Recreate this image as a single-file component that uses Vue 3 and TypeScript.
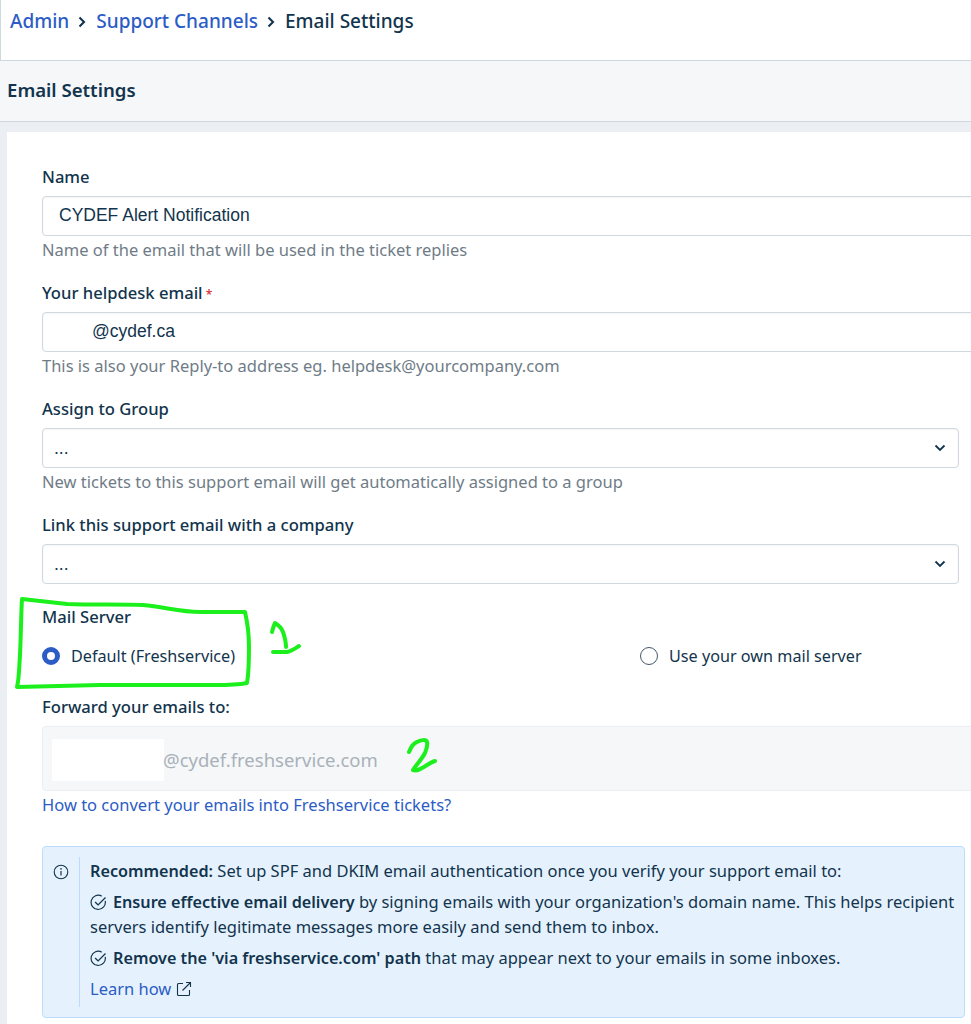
<script setup lang="ts">
interface Field { label: string; value: string; help: string; required?: boolean; select?: boolean; redacted?: boolean }
const fields: Field[] = [
  { label: 'Name', value: 'CYDEF Alert Notification', help: 'Name of the email that will be used in the ticket replies' },
  { label: 'Your helpdesk email', value: '@cydef.ca', help: 'This is also your Reply-to address eg. helpdesk@yourcompany.com', required: true, redacted: true },
  { label: 'Assign to Group', value: '...', help: 'New tickets to this support email will get automatically assigned to a group', select: true },
  { label: 'Link this support email with a company', value: '...', help: '', select: true },
]
</script>

<template>
  <div class="page">
    <nav class="crumbs">
      <a class="crumb-link">Admin</a>
      <svg class="crumb-sep" viewBox="0 0 10 12" width="10" height="12"><path d="M2.500 1.500L7 6l-4.500 4.500" fill="none" stroke="#12344d" stroke-width="2.100" /></svg>
      <a class="crumb-link">Support Channels</a>
      <svg class="crumb-sep" viewBox="0 0 10 12" width="10" height="12"><path d="M2.500 1.500L7 6l-4.500 4.500" fill="none" stroke="#12344d" stroke-width="2.100" /></svg>
      <span class="crumb-current">Email Settings</span>
    </nav>
    <header class="title-bar"><h1>Email Settings</h1></header>
    <main class="canvas">
      <section class="card">
        <div v-for="f in fields" :key="f.label" class="field" :class="{ 'field-select': f.select }">
          <label class="label">{{ f.label }}<span v-if="f.required" class="req"> *</span></label>
          <div class="control" :class="{ redacted: f.redacted, 'is-select': f.select }">
            <span>{{ f.value }}</span>
            <svg v-if="f.select" class="chevron" viewBox="0 0 12 8" width="12" height="8"><path d="M1.5 1.5L6 6l4.500-4.500" fill="none" stroke="#12344d" stroke-width="1.8" /></svg>
          </div>
          <p v-if="f.help" class="help">{{ f.help }}</p>
        </div>

        <label class="label server-label">Mail Server</label>
        <div class="radios">
          <div class="radio-item">
            <span class="radio on"></span>
            <span>Default (Freshservice)</span>
          </div>
          <div class="radio-item">
            <span class="radio"></span>
            <span>Use your own mail server</span>
          </div>
        </div>

        <label class="label forward-label">Forward your emails to:</label>
        <div class="forward-box">
          <span class="mask"></span>
          <span class="forward-text">@cydef.freshservice.com</span>
        </div>
        <a class="link convert">How to convert your emails into Freshservice tickets?</a>

        <aside class="notice">
          <div class="notice-icon">
            <svg viewBox="0 0 16 16" width="16" height="16"><circle cx="8" cy="8" r="6.800" fill="none" stroke="#12344d" stroke-width="1.100" /><path d="M8 7v4.500" stroke="#12344d" stroke-width="1.200" /><circle cx="8" cy="4.900" r=".8" fill="#12344d" /></svg>
          </div>
          <div class="notice-body">
            <p class="n1"><b>Recommended:</b> Set up SPF and DKIM email authentication once you verify your support email to:</p>
            <p class="n2">
              <svg class="check" viewBox="0 0 16 16" width="17" height="17"><path d="M14.300 6.500A6.700 6.700 0 1 1 11 2" fill="none" stroke="#12344d" stroke-width="1.100" /><path d="M4.800 7.500l2.800 2.800 7-7" fill="none" stroke="#12344d" stroke-width="1.200" /></svg>
              <b>Ensure effective email delivery</b> by signing emails with your organization's domain name. This helps recipient servers identify legitimate messages more easily and send them to inbox.
            </p>
            <p class="n3">
              <svg class="check" viewBox="0 0 16 16" width="17" height="17"><path d="M14.300 6.500A6.700 6.700 0 1 1 11 2" fill="none" stroke="#12344d" stroke-width="1.100" /><path d="M4.800 7.500l2.800 2.800 7-7" fill="none" stroke="#12344d" stroke-width="1.200" /></svg>
              <b>Remove the 'via freshservice.com' path</b> that may appear next to your emails in some inboxes.
            </p>
            <p class="n4">
              <a class="link">Learn how</a>
              <svg class="ext" viewBox="0 0 16 16" width="16" height="16"><path d="M7 2.500H2.500a1 1 0 0 0-1 1v10a1 1 0 0 0 1 1h10a1 1 0 0 0 1-1V9" fill="none" stroke="#12344d" stroke-width="1.100" /><path d="M6.500 9.500l8-8M10 1.500h4.500V6" fill="none" stroke="#12344d" stroke-width="1.100" /></svg>
            </p>
          </div>
        </aside>
      </section>
    </main>

    <svg class="ink" viewBox="0 0 971 1024" width="971" height="1024">
      <g fill="none" stroke="#1cf01c" stroke-width="4" stroke-linecap="round" stroke-linejoin="round">
        <path d="M22 599L67 604C95 605 120 604 143 605C165 607 180 612 200 612L245 612C248 625 249 636 249 647C249 660 249 672 247 683C232 686 215 685 200 685L100 685L17 687C19 680 19 670 20 655C21 635 21 615 22 599Z" />
        <path d="M272 632C273 628 274 625 275 623C280 626 282 629 283 632C285 638 286 643 286 647M273 652C280 652 283 652 287 652C292 651 296 648 299 646" />
        <path d="M409 752C411 747 414 743 417 742C421 740 426 739 427 742C428 746 426 750 425 753C422 759 416 765 413 770C416 771 419 770 422 768C426 766 431 762 435 761" />
      </g>
    </svg>
  </div>
</template>

<style>
html, body { margin: 0; padding: 0; background: #fff; }
</style>

<style scoped>
.page {
  position: relative;
  width: 971px;
  height: 1024px;
  overflow: hidden;
  background: #ebeff3;
  color: #12344d;
  font-family: "Noto Sans", "Liberation Sans", sans-serif;
  font-size: 16.500px;
  line-height: 24px;
}
.crumbs {
  box-sizing: border-box;
  height: 61px;
  padding: 9px 0 0 9px;
  display: flex;
  align-items: flex-start;
  background: #fff;
  border-left: 1px solid #cfd7df;
  border-bottom: 1px solid #cfd7df;
  font-size: 19px;
  font-weight: 500;
}
.crumb-link { color: #2c5cc5; }
.crumb-sep { margin: 7px 9px 0 8px; }
.title-bar {
  box-sizing: border-box;
  height: 61px;
  background: #f5f7f9;
  border-bottom: 1px solid #cfd7df;
  padding: 0 0 2px 7px;
  display: flex;
  align-items: center;
}
.title-bar h1 { margin: 0; font-size: 18.600px; font-weight: 600; line-height: 24px; }
.canvas { padding: 10px 0 0 7px; }
.card {
  box-sizing: border-box;
  height: 892px;
  background: #fff;
  padding: 33px 6px 0 35px;
  overflow: hidden;
}
.field { margin-bottom: 19px; width: calc(100% + 30px); }
.field-select { width: calc(100% - 6px); margin-bottom: 19px; }
.field-select:nth-child(4) { margin-bottom: 0; }
.label { display: block; font-size: 16.600px; font-weight: 500; line-height: 24px; }
.req { color: #d72d30; font-size: 12px; line-height: 1; }
.control {
  box-sizing: border-box;
  height: 40px;
  margin-top: 7px;
  padding: 0 12px 2px 16px;
  display: flex;
  align-items: center;
  justify-content: space-between;
  background: #fff;
  border: 1px solid #cfd7df;
  border-radius: 4px;
  box-shadow: inset 0 1px 2px rgba(24, 50, 71, .05);
  font-family: "Liberation Sans", Arial, sans-serif;
  font-size: 17.500px;
}
.control.is-select { padding: 0 12px 0 11px; }
.control.redacted { padding-left: 49px; }
.help { margin: 2px 0 0; color: #6f7c87; line-height: 24px; }
.server-label { margin-top: 21px; }
.radios { display: flex; margin-top: 15px; height: 24px; font-size: 16.200px; }
.radio-item { display: flex; align-items: center; gap: 11px; }
.radio-item:first-child { width: 598px; }
.radio {
  box-sizing: border-box;
  width: 18px;
  height: 18px;
  border: 1px solid #475867;
  border-radius: 50%;
}
.radio.on { border: 5px solid #2c5cc5; }
.forward-label { margin-top: 27px; }
.forward-box {
  box-sizing: border-box;
  height: 65px;
  width: calc(100% + 30px);
  margin-top: 7px;
  padding-left: 9px;
  display: flex;
  align-items: center;
  background: #f5f7f9;
  border: 1px solid #ebeff3;
  border-radius: 4px;
}
.mask { width: 112px; height: 42px; background: #fff; margin-top: 3px; }
.forward-text { color: #a9b1b9; font-size: 18.500px; margin: 3px 0 0 -1px; }
.link { color: #2c5cc5; }
.convert { display: block; margin-top: 2px; line-height: 24px; }
.notice {
  box-sizing: border-box;
  display: flex;
  height: 172px;
  margin-top: 29px;
  padding: 10px 0 10px 10px;
  background: #e5f2fd;
  border: 1px solid #bbdcfe;
  border-radius: 4px;
}
.notice-icon {
  box-sizing: border-box;
  width: 27px;
  padding-top: 5px;
  border-right: 1px solid #bbdcfe;
}
.notice-body { padding: 1px 4px 0 10px; flex: 1; }
.notice-body p { margin: 0; line-height: 25px; }
.notice-body b { font-size: 16.200px; font-weight: 600; line-height: 1; }
.n2 { margin-top: 6px !important; }
.n3 { margin-top: 6px !important; }
.n4 { margin-top: 6px !important; }
.check { vertical-align: -3px; margin-right: 6px; }
.ext { vertical-align: -2px; margin-left: 5px; }
.ink { position: absolute; left: 0; top: 0; pointer-events: none; }
</style>
